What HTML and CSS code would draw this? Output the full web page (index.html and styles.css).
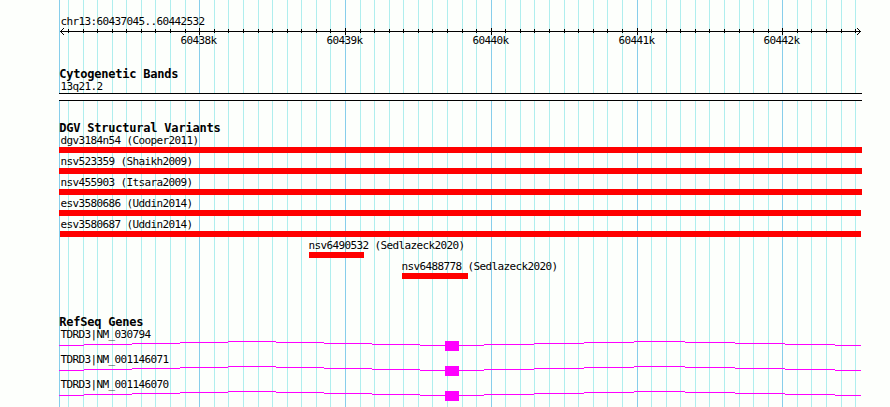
FILE: index.html
```
<!DOCTYPE html>
<html lang="en">

<head>
    <meta charset="UTF-8">
    <title>chr13:60437045..60442532</title>
    <link rel="stylesheet" href="styles.css">
</head>

<body>
    <div class="panel">
        <svg class="grid" width="890" height="407">
            <path class="minor" d="M68.5 0v407M83.5 0v407M97.5 0v407M112.5 0v407M126.5 0v407M141.5 0v407M155.5 0v407M170.5 0v407M185.5 0v407M214.5 0v407M228.5 0v407M243.5 0v407M258.5 0v407M272.5 0v407M287.5 0v407M301.5 0v407M316.5 0v407M330.5 0v407M360.5 0v407M374.5 0v407M389.5 0v407M403.5 0v407M418.5 0v407M432.5 0v407M447.5 0v407M462.5 0v407M476.5 0v407M505.5 0v407M520.5 0v407M534.5 0v407M549.5 0v407M564.5 0v407M578.5 0v407M593.5 0v407M607.5 0v407M622.5 0v407M651.5 0v407M666.5 0v407M680.5 0v407M695.5 0v407M709.5 0v407M724.5 0v407M739.5 0v407M753.5 0v407M768.5 0v407M797.5 0v407M811.5 0v407M826.5 0v407M841.5 0v407M855.5 0v407"/>
            <path class="major" d="M59.5 0v407M199.5 0v407M345.5 0v407M491.5 0v407M637.5 0v407M782.5 0v407"/>
        </svg>

        <div class="tracks">
            <div class="label">chr13:60437045..60442532</div>
            <svg class="axis" width="890" height="40">
                <path d="M60 3.5H861M63.5 0v1M62.5 1v1M61.5 2v1M61.5 4v1M62.5 5v1M63.5 6v1M857.5 0v1M858.5 1v1M859.5 2v1M859.5 4v1M858.5 5v1M857.5 6v1"/>
                <path d="M68.5 1v4M83.5 1v4M97.5 1v4M112.5 1v4M126.5 1v4M141.5 1v4M155.5 1v4M170.5 1v4M185.5 1v4M214.5 1v4M228.5 1v4M243.5 1v4M258.5 1v4M272.5 1v4M287.5 1v4M301.5 1v4M316.5 1v4M330.5 1v4M360.5 1v4M374.5 1v4M389.5 1v4M403.5 1v4M418.5 1v4M432.5 1v4M447.5 1v4M462.5 1v4M476.5 1v4M505.5 1v4M520.5 1v4M534.5 1v4M549.5 1v4M564.5 1v4M578.5 1v4M593.5 1v4M607.5 1v4M622.5 1v4M651.5 1v4M666.5 1v4M680.5 1v4M695.5 1v4M709.5 1v4M724.5 1v4M739.5 1v4M753.5 1v4M768.5 1v4M797.5 1v4M811.5 1v4M826.5 1v4M841.5 1v4M855.5 1v4"/>
                <path d="M199.5 0v7M345.5 0v7M491.5 0v7M637.5 0v7M782.5 0v7"/>
                <text x="180.4" y="16">60438k</text>
                <text x="326.4" y="16">60439k</text>
                <text x="472.4" y="16">60440k</text>
                <text x="618.4" y="16">60441k</text>
                <text x="763.4" y="16">60442k</text>
            </svg>

            <div class="title">Cytogenetic Bands</div>
            <div class="label">13q21.2</div>
            <div class="band"></div>

            <div class="title variants-title">DGV Structural Variants</div>
            <div class="variant">
                <div class="label">dgv3184n54 (Cooper2011)</div>
                <div class="bar"></div>
            </div>
            <div class="variant">
                <div class="label">nsv523359 (Shaikh2009)</div>
                <div class="bar"></div>
            </div>
            <div class="variant">
                <div class="label">nsv455903 (Itsara2009)</div>
                <div class="bar"></div>
            </div>
            <div class="variant">
                <div class="label">esv3580686 (Uddin2014)</div>
                <div class="bar" style="width: 802px"></div>
            </div>
            <div class="variant">
                <div class="label">esv3580687 (Uddin2014)</div>
                <div class="bar" style="margin-left: 60px; width: 801px"></div>
            </div>
            <div class="variant">
                <div class="label" style="padding-left: 308.4px">nsv6490532 (Sedlazeck2020)</div>
                <div class="bar" style="margin-left: 309px; width: 55px"></div>
            </div>
            <div class="variant">
                <div class="label" style="padding-left: 401.4px">nsv6488778 (Sedlazeck2020)</div>
                <div class="bar" style="margin-left: 402px; width: 66px"></div>
            </div>

            <div class="title genes-title">RefSeq Genes</div>
            <svg width="0" height="0" class="defs">
                <symbol id="gene" viewBox="0 0 890 10">
                    <path class="intron" d="M59 4.5H84M84 3.5H132M132 2.5H180M180 1.5H228M228 .5H276M276 1.5H324M324 2.5H372M372 3.5H420M420 4.5H445M459 4.5H484M484 3.5H534M534 2.5H584M584 1.5H634M634 .5H685M685 1.5H735M735 2.5H785M785 3.5H835M835 4.5H861"/>
                    <rect class="exon" x="445" y="0" width="14" height="10"/>
                </symbol>
            </svg>
            <div class="gene">
                <div class="label">TDRD3|NM_030794</div>
                <svg width="890" height="10"><use href="#gene"/></svg>
            </div>
            <div class="gene">
                <div class="label">TDRD3|NM_001146071</div>
                <svg width="890" height="10"><use href="#gene"/></svg>
            </div>
            <div class="gene">
                <div class="label">TDRD3|NM_001146070</div>
                <svg width="890" height="10"><use href="#gene"/></svg>
            </div>
        </div>
    </div>
</body>

</html>
```
FILE: styles.css
```
body {
    margin: 0;
    background-color: #fdfffc;
}

.panel {
    position: relative;
    width: 890px;
    height: 407px;
    overflow: hidden;
    color: black;
    font-family: "DejaVu Sans Mono", monospace;
    font-size: 11px;
    line-height: 13px;
    letter-spacing: -0.62px;
}

svg {
    display: block;
    shape-rendering: crispEdges;
}

/* vertical lines behind all the tracks */
.grid {
    position: absolute;
    top: 0;
    left: 0;
}

.minor {
    stroke: #afeeee;
}

.major {
    stroke: #87ceeb;
}

.tracks {
    position: relative;
    padding-top: 15px;
}

.label {
    height: 13px;
    padding-left: 60.4px;
    white-space: pre;
}

.axis path {
    stroke: black;
}

.title {
    height: 12px;
    padding-left: 59.3px;
    font-size: 12px;
    font-weight: bold;
    letter-spacing: -0.22px;
    white-space: pre;
}

.band {
    box-sizing: border-box;
    width: 803px;
    height: 8px;
    margin-left: 59px;
    border: solid black;
    border-width: 1px 0;
    background-color: white;
}

.variants-title {
    margin-top: 21px;
}

.variant {
    height: 21px;
}

.bar {
    width: 803px;
    height: 6px;
    margin-left: 59px;
    background-color: red;
}

.genes-title {
    margin-top: 35px;
}

.defs {
    display: none;
}

.gene {
    height: 25px;
}

.intron {
    stroke: magenta;
}

.exon {
    fill: magenta;
}
```
